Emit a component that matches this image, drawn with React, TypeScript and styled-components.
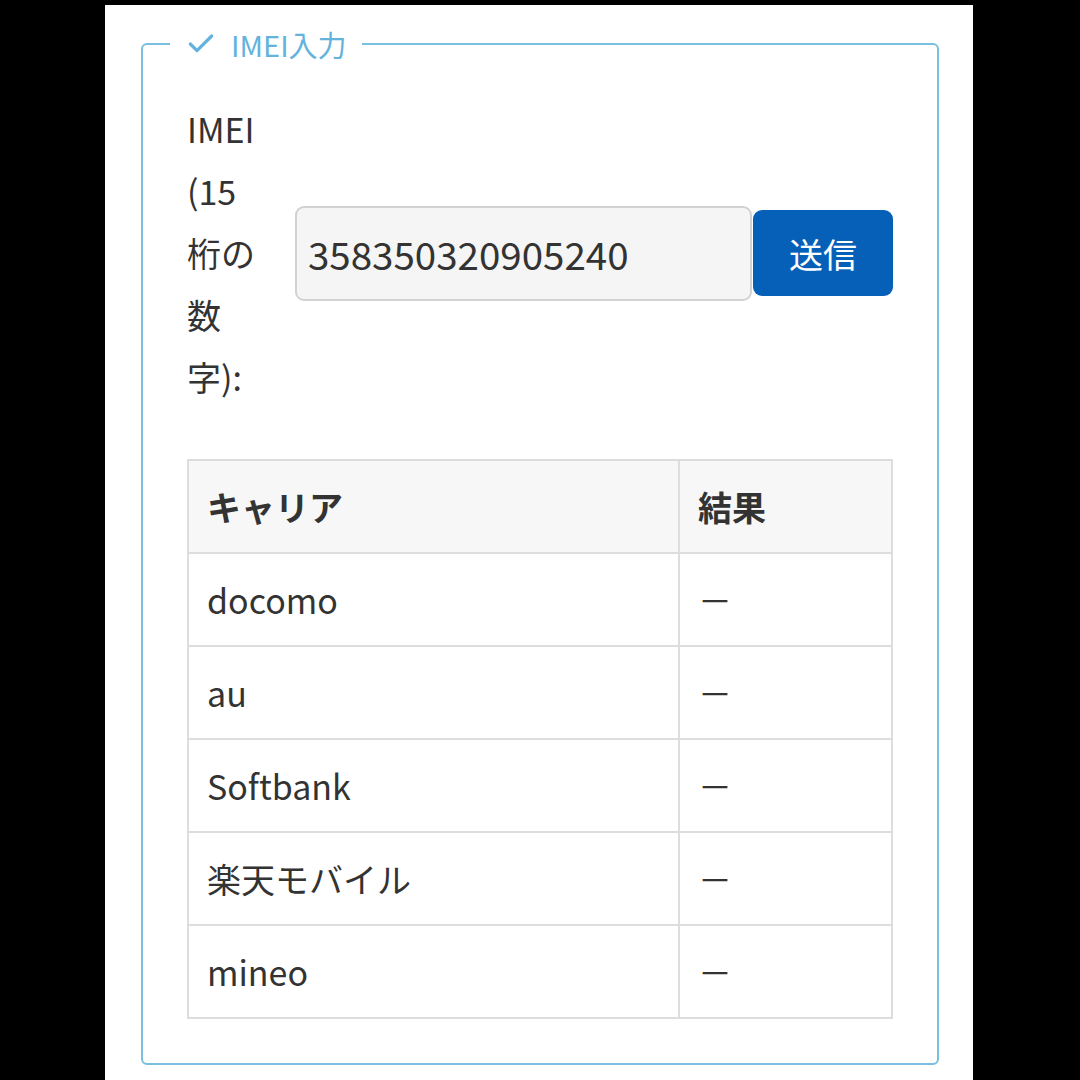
import styled, { createGlobalStyle } from "styled-components";
import { Check } from "lucide-react";

const GlobalStyle = createGlobalStyle`
  html, body {
    margin: 0;
    padding: 0;
    background: #000;
  }
  body {
    font-family: "Noto Sans CJK JP", "Noto Sans", sans-serif;
    color: #333;
  }
`;

const Page = styled.main`
  width: 868px;
  min-height: 1075px;
  margin: 5px 0 0 105px;
  background: #fff;
  padding: 1px 0 0 36px;
  box-sizing: border-box;
`;

const Fieldset = styled.fieldset`
  width: 798px;
  min-inline-size: 0;
  box-sizing: border-box;
  margin: 16px 0 0;
  padding: 32px 44px 44px;
  border: 2px solid #7abfdd;
  border-radius: 6px;
`;

const Legend = styled.legend`
  display: flex;
  align-items: center;
  gap: 14px;
  margin-left: -17px;
  padding: 0 15px;
  font-size: 29px;
  line-height: 44px;
  color: #63b3dd;
`;

const FormRow = styled.div`
  display: flex;
  align-items: center;
`;

const Label = styled.label`
  width: 80px;
  flex-shrink: 0;
  margin-right: 28px;
  font-size: 34px;
  line-height: 62px;
`;

const Input = styled.input`
  flex: 1 1 0;
  width: 0;
  min-width: 0;
  height: 95px;
  box-sizing: border-box;
  padding: 0 11px;
  font-family: inherit;
  font-size: 38.5px;
  color: #333;
  background: #f5f5f5;
  border: 2px solid #d2d2d2;
  border-radius: 9px;
`;

const SubmitButton = styled.button`
  width: 140px;
  height: 86px;
  flex-shrink: 0;
  margin-left: 1px;
  font-family: inherit;
  font-size: 34px;
  color: #fff;
  background: #0760b8;
  border: none;
  border-radius: 9px;
`;

const Table = styled.table`
  width: 100%;
  margin-top: 51px;
  border-collapse: collapse;
  font-size: 34px;

  th, td {
    border: 2px solid #dddddd;
    height: 93px;
    padding: 0 18px;
    text-align: left;
    box-sizing: border-box;
  }

  th {
    background: #f7f7f7;
    font-weight: 700;
  }

  th:first-child, td:first-child {
    width: 491px;
  }
`;

const carriers = ["docomo", "au", "Softbank", "楽天モバイル", "mineo"];

export default function App() {
  return (
    <>
      <GlobalStyle />
      <Page>
        <Fieldset>
          <Legend>
            <Check size={32} strokeWidth={2.4} />
            IMEI入力
          </Legend>
          <FormRow>
            <Label htmlFor="imei">IMEI (15桁の数字):</Label>
            <Input id="imei" defaultValue="358350320905240" />
            <SubmitButton type="button">送信</SubmitButton>
          </FormRow>
          <Table>
            <thead>
              <tr>
                <th>キャリア</th>
                <th>結果</th>
              </tr>
            </thead>
            <tbody>
              {carriers.map((c) => (
                <tr key={c}>
                  <td>{c}</td>
                  <td>－</td>
                </tr>
              ))}
            </tbody>
          </Table>
        </Fieldset>
      </Page>
    </>
  );
}
